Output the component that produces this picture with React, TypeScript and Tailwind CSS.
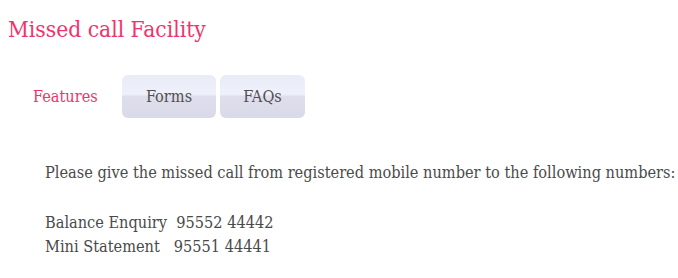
export default function App() {
  const f = { fontFamily: '"DejaVu Serif Condensed", "DejaVu Serif", serif' };
  const tab =
    "rounded-[6px] flex items-center justify-center pt-[2px] text-[16.2px] text-[#505050] bg-[linear-gradient(#e9ebf7_0%,#eef0fa_45%,#dedeed_50%,#d9d9e8_100%)]";
  return (
    <div className="w-[678px] h-[278px] bg-white overflow-hidden" style={f}>
      <h1 className="pl-2 pt-[14px] text-[22.6px] leading-[30px] text-[#f0336e]">Missed call Facility</h1>
      <div className="flex mt-[31px] pl-2 gap-1 h-[43px]">
        <div className="w-[110px] pl-[25px] pt-[2px] flex items-center text-[16.2px] text-[#f0336e]">Features</div>
        <div className={`w-[94px] ${tab}`}>Forms</div>
        <div className={`w-[85px] ${tab}`}>FAQs</div>
      </div>
      <div className="pl-[45px] pt-[43px] text-[16.2px] leading-[24.5px] text-[#4a4a4a] whitespace-nowrap">
        <p>Please give the missed call from registered mobile number to the following numbers:</p>
        <p className="mt-[25px]">Balance Enquiry&nbsp; 95552 44442</p>
        <p>Mini Statement&nbsp;&nbsp; 95551 44441</p>
      </div>
    </div>
  );
}
